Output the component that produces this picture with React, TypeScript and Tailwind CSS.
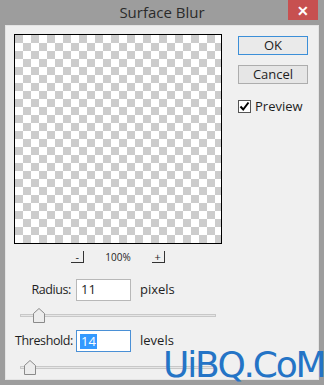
const font = { fontFamily: '"Open Sans", "Noto Sans", sans-serif' };

const Thumb = () => (
  <svg width="12" height="15" viewBox="0 0 12 15" className="absolute top-0">
    <path d="M0.5 14.5 V5.5 L6 0.5 L11.5 5.5 V14.5 Z" fill="#ececec" stroke="#8a8a8a" />
  </svg>
);

const Slider = ({ left, className }: { left: number; className: string }) => (
  <div className={`relative h-[15px] w-[196px] ${className}`}>
    <div className="absolute left-0 right-0 top-[6px] h-[3px] border border-[#c8c8c8] bg-[#e6e6e6]" />
    <div className="absolute top-0" style={{ left }}>
      <Thumb />
    </div>
  </div>
);

export default function App() {
  return (
    <div className="relative flex h-[385px] w-[324px] flex-col overflow-hidden bg-[#9d9d9d]" style={font}>
      <div className="relative flex h-[25px] shrink-0 items-center justify-center">
        <span className="text-[15px] text-[#2b2b2b]">Surface Blur</span>
        <div className="absolute right-[6px] top-0 flex h-[20px] w-[30px] items-center justify-center bg-[#c75050] text-[14px] font-bold text-white">
          ✕
        </div>
      </div>
      <div className="mx-[5px] mb-[5px] flex-1 border border-[#e4e4e4] bg-[#f0f0f0] text-[12px] text-[#1e1e1e]">
        <div className="flex pl-[8px] pt-[8px]">
          <div className="h-[210px] w-[208px] border border-black bg-white [background-image:conic-gradient(#fff_25%,#cccccc_0_50%,#fff_0_75%,#cccccc_0)] [background-size:16px_16px]" />
          <div className="ml-[16px] flex flex-col pt-[2px]">
            <div className="flex h-[19px] w-[70px] items-center justify-center border border-[#3c8fd8] bg-[#eaeaea] text-[13px]">
              OK
            </div>
            <div className="mt-[10px] flex h-[19px] w-[70px] items-center justify-center border border-[#adadad] bg-[#e6e6e6] text-[13px]">
              Cancel
            </div>
            <div className="mt-[13px] flex items-center">
              <div className="flex h-[13px] w-[13px] items-center justify-center border border-[#555] bg-white">
                <svg width="11" height="11" viewBox="0 0 11 11">
                  <path d="M1.5 5.5 L4.2 8.5 L9.5 1.5" fill="none" stroke="#000" strokeWidth="2" />
                </svg>
              </div>
              <span className="ml-[4px] text-[13px]">Preview</span>
            </div>
          </div>
        </div>
        <div className="ml-[8px] mt-[7px] flex w-[208px] items-center justify-center gap-[21px]">
          <div className="flex h-[12px] w-[13px] items-center justify-center border-b border-r border-[#333] text-[11px] leading-none">
            -
          </div>
          <span className="text-[10px] leading-none">100%</span>
          <div className="flex h-[12px] w-[13px] items-center justify-center border-b border-r border-[#333] text-[11px] leading-none">
            +
          </div>
        </div>
        <div className="mt-[16px] flex items-center">
          <span className="ml-[9px] w-[56px] whitespace-nowrap text-right text-[12.5px] tracking-[-0.4px]">Radius:</span>
          <div className="ml-[5px] flex h-[22px] w-[55px] items-center border border-[#b8b8b8] bg-white pl-[4px] text-[13px]">
            11
          </div>
          <span className="ml-[9px] text-[13px]">pixels</span>
        </div>
        <Slider left={13} className="ml-[14px] mt-[7px]" />
        <div className="mt-[7px] flex items-center">
          <span className="ml-[9px] w-[56px] whitespace-nowrap text-right text-[12.5px] tracking-[-0.4px]">Threshold:</span>
          <div className="ml-[5px] flex h-[22px] w-[55px] items-center border border-[#4a90d6] bg-white pl-[3px] text-[13px]">
            <span className="bg-[#3399ff] px-[1px] leading-[15px] text-white">14</span>
          </div>
          <span className="ml-[9px] text-[13px]">levels</span>
        </div>
        <Slider left={4} className="ml-[14px] mt-[8px]" />
      </div>
      <div
        className="absolute left-[163px] top-[347px] text-[36px] leading-none tracking-[-2.2px] text-[#2474c6]"
        style={{ fontFamily: '"DejaVu Sans", sans-serif' }}
      >
        UiBQ.CoM
      </div>
    </div>
  );
}
